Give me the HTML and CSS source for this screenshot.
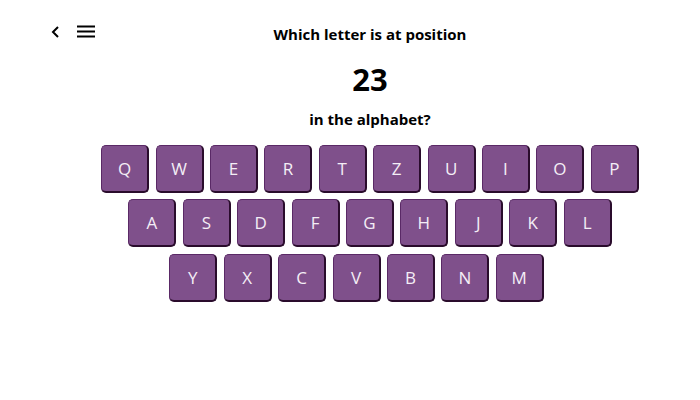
FILE: index.html
```html
<!DOCTYPE html>
<html>
<head>
<meta charset="utf-8">
<link rel="stylesheet" href="styles.css">
</head>
<body>
<div class="page">
  <header class="topbar">
    <div class="nav">
      <button class="icon-btn back" aria-label="Back">
        <svg width="12" height="16" viewBox="0 0 12 16"><path d="M8 3 L3 8 L8 13" fill="none" stroke="#000" stroke-width="2"/></svg>
      </button>
      <button class="icon-btn menu" aria-label="Menu">
        <svg width="20" height="16" viewBox="0 0 20 16"><path d="M1 2.5 H19 M1 7.5 H19 M1 12.5 H19" fill="none" stroke="#000" stroke-width="2"/></svg>
      </button>
    </div>
    <h1 class="question">Which letter is at position</h1>
    <div></div>
  </header>
  <div class="number">23</div>
  <div class="suffix">in the alphabet?</div>
  <div class="keyboard">
    <div class="row">
      <button class="key">Q</button><button class="key">W</button><button class="key">E</button><button class="key">R</button><button class="key">T</button><button class="key">Z</button><button class="key">U</button><button class="key">I</button><button class="key">O</button><button class="key">P</button>
    </div>
    <div class="row">
      <button class="key">A</button><button class="key">S</button><button class="key">D</button><button class="key">F</button><button class="key">G</button><button class="key">H</button><button class="key">J</button><button class="key">K</button><button class="key">L</button>
    </div>
    <div class="row last">
      <button class="key">Y</button><button class="key">X</button><button class="key">C</button><button class="key">V</button><button class="key">B</button><button class="key">N</button><button class="key">M</button>
    </div>
  </div>
</div>
</body>
</html>
```
FILE: styles.css
```css
html, body {
  margin: 0;
  padding: 0;
  background: #fff;
}
body {
  font-family: "Open Sans", "Noto Sans", sans-serif;
  color: #000;
}
.page {
  padding: 0 0 0 40px;
  width: 660px;
}
.topbar {
  display: grid;
  grid-template-columns: 1fr auto 1fr;
  align-items: center;
  height: 68px;
}
.nav {
  display: flex;
  align-items: center;
  gap: 14px;
  margin-left: 10px;
  padding-bottom: 4px;
}
.icon-btn {
  border: 0;
  background: none;
  padding: 0;
  display: flex;
  cursor: pointer;
}
.question {
  margin: 0;
  font-size: 15px;
  font-weight: 700;
  line-height: 20px;
  text-align: center;
}
.number {
  text-align: center;
  font-size: 31px;
  font-weight: 700;
  line-height: 24px;
  margin-top: -1px;
}
.suffix {
  text-align: center;
  font-size: 15px;
  font-weight: 700;
  line-height: 20px;
  margin-top: 18px;
}
.keyboard {
  display: flex;
  flex-direction: column;
  align-items: center;
  gap: 6.4px;
  margin-top: 16px;
}
.row {
  display: flex;
  gap: 6.4px;
}
.row.last {
  margin-right: 27px;
}
.key {
  width: 48px;
  height: 48px;
  box-sizing: border-box;
  background: #7f508b;
  border: 1px solid #5a2966;
  border-right: 2px solid #2a0c2c;
  border-bottom: 2px solid #2a0c2c;
  border-radius: 5px;
  color: #f4eef6;
  font-family: "Open Sans", "Noto Sans", sans-serif;
  font-size: 17px;
  padding: 0;
  display: flex;
  align-items: center;
  justify-content: center;
}
```
